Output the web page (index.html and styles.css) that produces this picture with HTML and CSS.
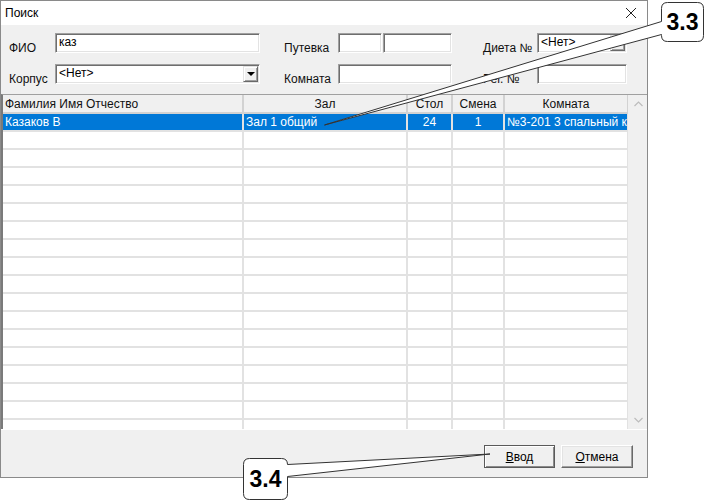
FILE: index.html
```html
<!DOCTYPE html>
<html lang="ru">
<head>
    <meta charset="UTF-8">
    <title>Поиск</title>
    <link rel="stylesheet" href="styles.css">
</head>
<body>

    <div class="window">
        <div class="titlebar">
            <span class="title">Поиск</span>
            <svg class="close" width="12" height="12" viewBox="0 0 12 12">
                <path d="M1 1 L11 11 M11 1 L1 11" stroke="#222" stroke-width="1" fill="none"/>
            </svg>
        </div>

        <div class="filters">
            <div class="frow">
                <span class="lbl lbl-first">ФИО</span>
                <div class="field w205">каз</div>
                <span class="lbl lbl-mid">Путевка</span>
                <div class="field w44"></div>
                <div class="field w69"></div>
                <span class="lbl lbl-last">Диета №</span>
                <div class="field combo w90">
                    <span>&lt;Нет&gt;</span>
                    <span class="drop"><i class="arrow"></i></span>
                </div>
            </div>
            <div class="frow">
                <span class="lbl lbl-first">Корпус</span>
                <div class="field combo w205">
                    <span>&lt;Нет&gt;</span>
                    <span class="drop"><i class="arrow"></i></span>
                </div>
                <span class="lbl lbl-mid">Комната</span>
                <div class="field w114"></div>
                <span class="lbl lbl-last">Рег. №</span>
                <div class="field w90"></div>
            </div>
        </div>

        <div class="grid">
            <div class="grid-body">
                <table>
                    <colgroup>
                        <col style="width:240px">
                        <col style="width:164px">
                        <col style="width:45px">
                        <col style="width:52px">
                        <col style="width:124px">
                    </colgroup>
                    <thead>
                        <tr>
                            <th class="left">Фамилия Имя Отчество</th>
                            <th>Зал</th>
                            <th>Стол</th>
                            <th>Смена</th>
                            <th>Комната</th>
                        </tr>
                    </thead>
                    <tbody id="rows">
                        <tr class="selected">
                            <td>Казаков В</td>
                            <td>Зал 1 общий</td>
                            <td class="center">24</td>
                            <td class="center">1</td>
                            <td>№3-201 3 спальный корпус</td>
                        </tr>
                    </tbody>
                </table>
            </div>
            <div class="vscroll">
                <svg width="9" height="6" viewBox="0 0 9 6"><polyline points="0.5,5 4.5,1 8.5,5" fill="none" stroke="#bcbcbc" stroke-width="1.2"/></svg>
                <svg width="9" height="6" viewBox="0 0 9 6"><polyline points="0.5,1 4.5,5 8.5,1" fill="none" stroke="#bcbcbc" stroke-width="1.2"/></svg>
            </div>
        </div>

        <div class="buttons">
            <button class="btn btn-default"><u>В</u>вод</button>
            <button class="btn"><u>О</u>тмена</button>
        </div>
    </div>

    <svg class="callouts" width="707" height="502" viewBox="0 0 707 502">
        <path d="M667.5 2.5 H697.5 Q703.5 2.5 703.5 8.5 V35.5 Q703.5 41.5 697.5 41.5 H667.5 Q661.5 41.5 661.5 35.5 V34.5 L324.5 125 L661.5 21.5 V8.5 Q661.5 2.5 667.5 2.5 Z"
              fill="#fff" stroke="#333" stroke-width="1"/>
        <path d="M249.5 458.5 H281.5 Q287.5 458.5 287.5 464.5 L490 454 L287.5 476.5 V493.5 Q287.5 499.5 281.5 499.5 H249.5 Q243.5 499.5 243.5 493.5 V464.5 Q243.5 458.5 249.5 458.5 Z"
              fill="#fff" stroke="#333" stroke-width="1"/>
    </svg>
    <div class="callout c33">3.3</div>
    <div class="callout c34">3.4</div>

    <script>
        let body = document.getElementById('rows');
        for (let i = 0; i < 17; i++) {
            body.innerHTML += '<tr><td></td><td></td><td></td><td></td><td></td></tr>';
        }
    </script>

</body>
</html>
```

FILE: styles.css
```css
body {
    font-family: 'Liberation Sans', Arial, sans-serif;
    font-size: 12px;
    margin: 0;
    padding: 0;
    background: #fff;
    color: #000;
}

.window {
    box-sizing: border-box;
    width: 648px;
    height: 478px;
    border: 1px solid #8a8a8a;
    display: flex;
    flex-direction: column;
    background: #f0f0f0;
}

.titlebar {
    height: 24px;
    background: #fff;
    display: flex;
    justify-content: space-between;
    align-items: center;
    padding: 0 10px 0 4px;
    flex-shrink: 0;
}

.title {
    font-size: 12px;
}

.close {
    display: block;
}

.filters {
    height: 69px;
    flex-shrink: 0;
    box-sizing: border-box;
    padding: 8px 0 0 8px;
    display: flex;
    flex-direction: column;
    gap: 11px;
}

.frow {
    display: flex;
    align-items: flex-start;
    height: 20px;
}

.lbl {
    line-height: 14px;
    margin-top: 8px;
    white-space: nowrap;
    color: #111;
}

.lbl-first {
    width: 46px;
}

.lbl-mid {
    width: 54px;
    margin-left: 24px;
}

.lbl-last {
    width: 54px;
    margin-left: 31px;
}

.field {
    box-sizing: border-box;
    height: 20px;
    background: #fff;
    border: 1px solid;
    border-color: #a0a0a0 #fff #fff #a0a0a0;
    box-shadow: inset 1px 1px 0 #6e6e6e, inset -1px -1px 0 #e3e3e3;
    padding: 1px 3px;
    line-height: 14px;
}

.w205 { width: 205px; }
.w44 { width: 44px; }
.w69 { width: 69px; margin-left: 1px; }
.w114 { width: 114px; }
.w90 { width: 90px; }

.combo {
    display: flex;
    justify-content: space-between;
    padding: 1px 1px 1px 3px;
}

.drop {
    box-sizing: border-box;
    width: 15px;
    height: 16px;
    background: #f0f0f0;
    border: 1px solid;
    border-color: #e3e3e3 #696969 #696969 #e3e3e3;
    box-shadow: inset 1px 1px 0 #fff, inset -1px -1px 0 #a0a0a0;
    display: flex;
    align-items: center;
    justify-content: center;
}

.arrow {
    width: 0;
    height: 0;
    border-left: 4px solid transparent;
    border-right: 4px solid transparent;
    border-top: 4px solid #000;
}

.grid {
    height: 335px;
    flex-shrink: 0;
    box-sizing: border-box;
    background: #fff;
    border-top: 1px solid #a0a0a0;
    border-left: 2px solid #7a7a7a;
    display: flex;
}

.grid-body {
    width: 627px;
    overflow: hidden;
}

table {
    width: 625px;
    table-layout: fixed;
    border-collapse: collapse;
}

th, td {
    box-sizing: border-box;
    height: 18px;
    padding: 0 2px;
    white-space: nowrap;
    overflow: hidden;
    line-height: 16px;
}

th {
    background: #f0f0f0;
    font-weight: normal;
    text-align: center;
    border-right: 2px solid #d2d2d2;
    border-bottom: 2px solid #d2d2d2;
    color: #111;
}

th.left {
    text-align: left;
}

td {
    border-right: 2px solid #e2e2e2;
    border-bottom: 2px solid #e2e2e2;
}

td.center {
    text-align: center;
}

tr.selected td {
    background: #0078d7;
    color: #fff;
}

.vscroll {
    width: 18px;
    background: #f0f0f0;
    display: flex;
    flex-direction: column;
    justify-content: space-between;
    align-items: center;
    padding: 6px 0 6px 1px;
}

.vscroll svg {
    display: block;
}

.buttons {
    flex: 1;
    display: flex;
    justify-content: flex-end;
    align-items: flex-start;
    gap: 6px;
    padding: 15px 14px 0 0;
    border-top: 1px solid #fff;
}

.btn {
    box-sizing: border-box;
    height: 23px;
    width: 72px;
    font-family: 'Liberation Sans', Arial, sans-serif;
    font-size: 12px;
    background: #f0f0f0;
    border: 1px solid;
    border-color: #fff #696969 #696969 #fff;
    box-shadow: inset -1px -1px 0 #a0a0a0, inset 1px 1px 0 #e3e3e3;
    padding: 0;
    color: #000;
}

.btn-default {
    width: 71px;
    border-color: #5a5a5a;
    box-shadow: inset 1px 1px 0 #fff, inset -1px -1px 0 #8a8a8a;
}

.callouts {
    position: absolute;
    top: 0;
    left: 0;
}

.callout {
    position: absolute;
    display: flex;
    align-items: center;
    justify-content: center;
    font-family: 'Liberation Sans', Arial, sans-serif;
    font-weight: bold;
    font-size: 23px;
    color: #000;
}

.c33 {
    left: 662px;
    top: 3px;
    width: 41px;
    height: 38px;
}

.c34 {
    left: 244px;
    top: 459px;
    width: 43px;
    height: 40px;
}
```
